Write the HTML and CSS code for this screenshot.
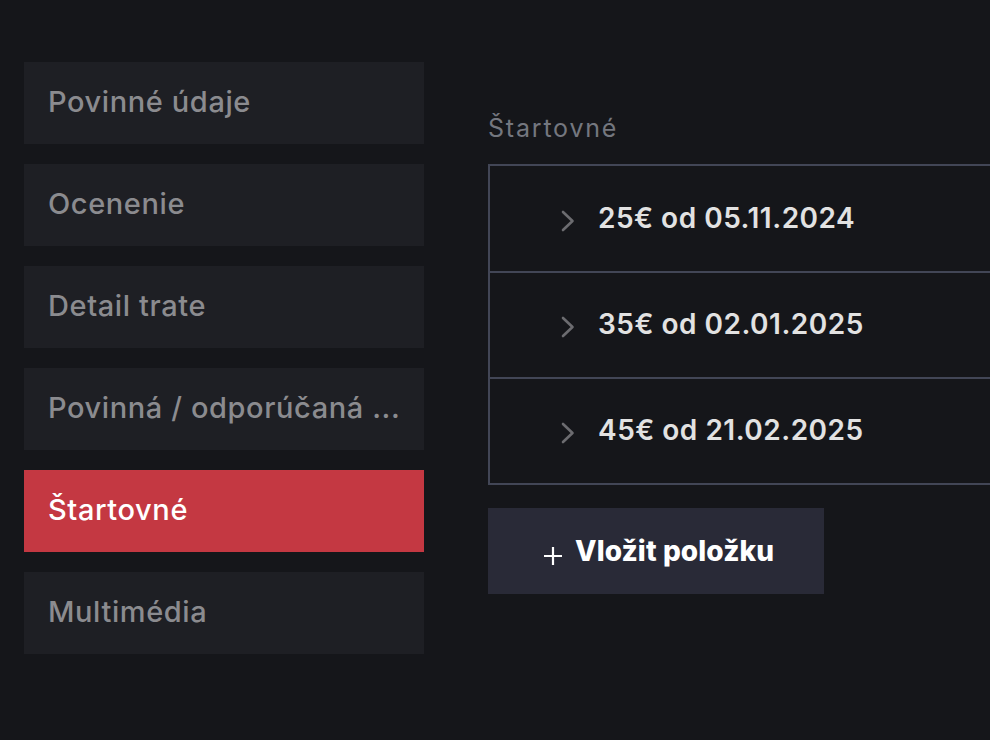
FILE: index.html
```html
<!DOCTYPE html>
<html lang="sk">
<head>
<meta charset="utf-8">
<title>Štartovné</title>
<link rel="stylesheet" href="styles.css">
</head>
<body>
<div class="page">
  <nav class="sidebar">
    <div class="nav-item">Povinné údaje</div>
    <div class="nav-item">Ocenenie</div>
    <div class="nav-item">Detail trate</div>
    <div class="nav-item">Povinná / odporúčaná ...</div>
    <div class="nav-item active">Štartovné</div>
    <div class="nav-item">Multimédia</div>
  </nav>
  <main class="content">
    <div class="label">Štartovné</div>
    <div class="list">
      <div class="row">
        <svg class="chev" viewBox="0 0 16 24" width="16" height="24"><path d="M3 3 L12.5 12 L3 21" fill="none" stroke="currentColor" stroke-width="2.6" stroke-linecap="round" stroke-linejoin="round"/></svg>
        <span class="row-text">25€ od 05.11.2024</span>
      </div>
      <div class="row">
        <svg class="chev" viewBox="0 0 16 24" width="16" height="24"><path d="M3 3 L12.5 12 L3 21" fill="none" stroke="currentColor" stroke-width="2.6" stroke-linecap="round" stroke-linejoin="round"/></svg>
        <span class="row-text">35€ od 02.01.2025</span>
      </div>
      <div class="row">
        <svg class="chev" viewBox="0 0 16 24" width="16" height="24"><path d="M3 3 L12.5 12 L3 21" fill="none" stroke="currentColor" stroke-width="2.6" stroke-linecap="round" stroke-linejoin="round"/></svg>
        <span class="row-text">45€ od 21.02.2025</span>
      </div>
    </div>
    <button class="add-btn" type="button">
      <svg class="plus" viewBox="0 0 20 20" width="20" height="20"><path d="M10 1 V19 M1 10 H19" fill="none" stroke="currentColor" stroke-width="2.2"/></svg>
      <span>Vložit položku</span>
    </button>
  </main>
</div>
</body>
</html>
```
FILE: styles.css
```css
html, body {
  margin: 0;
  padding: 0;
  background: #15161a;
  overflow: hidden;
}
body {
  width: 990px;
  height: 740px;
  font-family: "Inter", "Open Sans", sans-serif;
}
.page {
  display: flex;
  gap: 64px;
  padding: 62px 0 0 24px;
}
.sidebar {
  width: 400px;
  flex: none;
  display: flex;
  flex-direction: column;
  gap: 20px;
}
.nav-item {
  height: 82px;
  box-sizing: border-box;
  padding: 0 24px 4px;
  display: flex;
  align-items: center;
  background: #1e1f24;
  color: #8b8b8f;
  font-size: 29px;
  font-weight: 500;
  letter-spacing: 0.6px;
  white-space: nowrap;
  overflow: hidden;
  text-overflow: ellipsis;
}
.nav-item.active {
  background: #c43842;
  color: #ffffff;
}
.content {
  flex: none;
  width: 502px;
  display: flex;
  flex-direction: column;
}
.label {
  height: 102px;
  box-sizing: border-box;
  padding-top: 50px;
  color: #74777f;
  font-size: 25px;
  font-weight: 400;
  letter-spacing: 1.8px;
  line-height: 32px;
}
.list {
  border: 2px solid #424656;
  border-right: none;
  width: 502px;
  box-sizing: border-box;
}
.row {
  height: 105px;
  box-sizing: border-box;
  display: flex;
  align-items: center;
  padding-left: 70px;
  padding-bottom: 2px;
  gap: 22px;
  color: #e2e2e2;
}
.row + .row {
  height: 106px;
  border-top: 2px solid #424656;
}
.chev {
  flex: none;
  color: #6c6c70;
  margin-top: 6px;
}
.row-text {
  font-size: 28px;
  font-weight: 600;
  letter-spacing: 0.5px;
  white-space: nowrap;
}
.add-btn {
  margin-top: 23px;
  width: 336px;
  height: 86px;
  border: none;
  background: #292a37;
  color: #ffffff;
  display: flex;
  align-items: center;
  padding: 0 0 0 55px;
  gap: 12px;
  font-family: "Inter", sans-serif;
  font-size: 28px;
  font-weight: 800;
  letter-spacing: 0.1px;
}
.plus {
  flex: none;
  margin-top: 9px;
}
```
